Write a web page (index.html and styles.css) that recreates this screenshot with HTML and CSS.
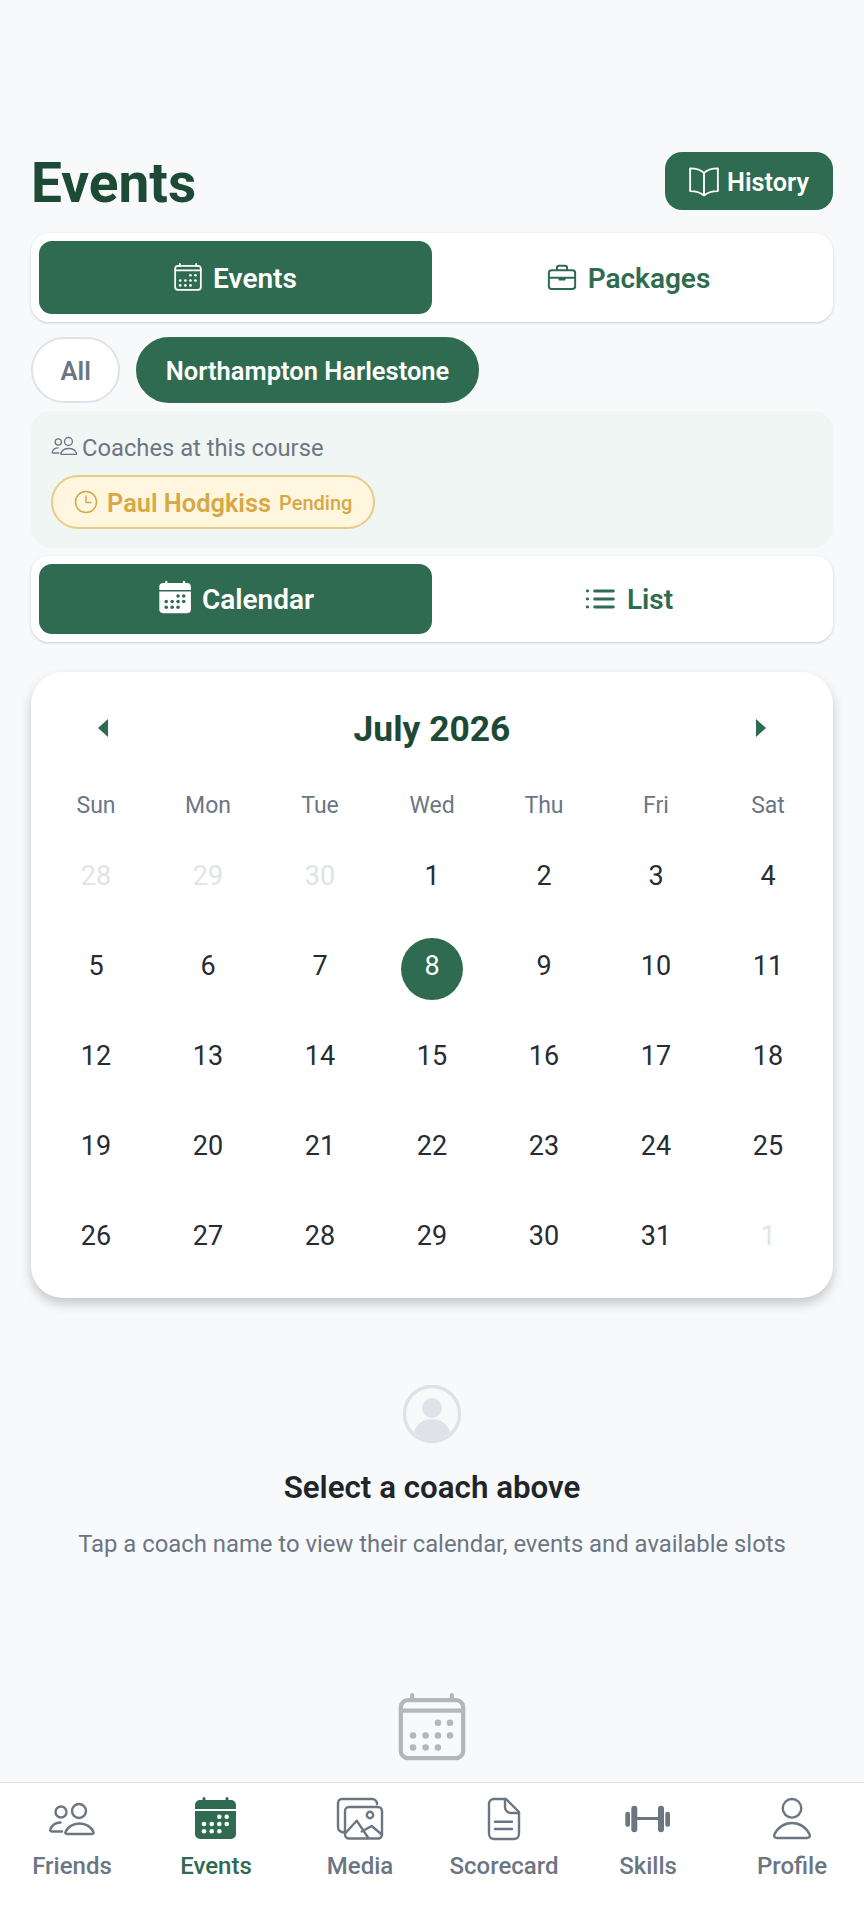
FILE: index.html
```html
<!DOCTYPE html>
<html lang="en">
<head>
    <meta charset="UTF-8">
    <meta name="viewport" content="width=device-width, initial-scale=1.0">
    <title>Events</title>
    <link rel="stylesheet" href="styles.css">
</head>
<body>
    <svg class="defs" width="0" height="0" aria-hidden="true">
        <symbol id="i-cal" viewBox="0 0 48 48">
            <rect x="2" y="5" width="44" height="41" rx="5" fill="none" stroke="currentColor" stroke-width="3"/>
            <path d="M2 12.500h44M10 1.500v3.500M38 1.500v3.500" fill="none" stroke="currentColor" stroke-width="3" stroke-linecap="round"/>
            <g fill="currentColor">
                <circle cx="28.200" cy="21" r="2.300"/><circle cx="36.700" cy="21" r="2.300"/>
                <circle cx="10.600" cy="30" r="2.300"/><circle cx="19.500" cy="30" r="2.300"/><circle cx="28.200" cy="30" r="2.300"/><circle cx="36.700" cy="30" r="2.300"/>
                <circle cx="10.600" cy="38.500" r="2.300"/><circle cx="19.500" cy="38.500" r="2.300"/><circle cx="28.200" cy="38.500" r="2.300"/>
            </g>
        </symbol>
        <symbol id="i-cal-fill" viewBox="0 0 48 48">
            <path d="M8 4h31a5 5 0 0 1 5 5v4H3V9a5 5 0 0 1 5-5zM3 15h41v23a5 5 0 0 1-5 5H8a5 5 0 0 1-5-5z" fill="currentColor"/>
            <path d="M12 2.500v3M35 2.500v3" stroke="currentColor" stroke-width="3" stroke-linecap="round"/>
            <g fill="var(--dot)">
                <circle cx="27.300" cy="20.700" r="2.300"/><circle cx="34.700" cy="20.700" r="2.300"/>
                <circle cx="12" cy="28" r="2.300"/><circle cx="19.700" cy="28" r="2.300"/><circle cx="27.300" cy="28" r="2.300"/><circle cx="34.700" cy="28" r="2.300"/>
                <circle cx="12" cy="35.300" r="2.300"/><circle cx="19.700" cy="35.300" r="2.300"/><circle cx="27.300" cy="35.300" r="2.300"/>
            </g>
        </symbol>
        <symbol id="i-people" viewBox="0 0 48 48">
            <g fill="none" stroke="currentColor" stroke-width="2.400" stroke-linejoin="round" stroke-linecap="round">
                <circle cx="13" cy="16" r="5.500"/>
                <circle cx="31" cy="15" r="7"/>
                <path d="M14 35.500H4c-1.500 0-2.200-1-1.700-2C4 29 8 26.500 12.500 26.500"/>
                <path d="M19 38h25c1.500 0 2-1 1.500-2C43.500 31 38 27.500 31.500 27.500S19.500 31 17.500 36c-.5 1 0 2 1.500 2z"/>
            </g>
        </symbol>
    </svg>

    <main class="content">
        <header class="page-head">
            <h1>Events</h1>
            <button class="btn-history">
                <svg class="ico-30" viewBox="1.400 2 21.200 21.200" fill="none" stroke="currentColor" stroke-width="1.300" stroke-linejoin="round" stroke-linecap="round"><path d="M12 6.200C10 4.200 6.600 3 2.200 3v16c4.400 0 7.800 1.200 9.800 3.200 2-2 5.400-3.200 9.800-3.200V3C17.600 3 14 4.200 12 6.200zM12 6.200v16"/></svg>
                History
            </button>
        </header>

        <div class="tabs">
            <button class="tab active">
                <svg class="ico-28"><use href="#i-cal"/></svg>
                Events
            </button>
            <button class="tab">
                <svg class="ico-30" viewBox="0 0 24 24" fill="none" stroke="currentColor" stroke-width="1.600" stroke-linejoin="round"><rect x="1.500" y="6.500" width="21" height="15" rx="2.200"/><path d="M8 6.500V4.500A1.500 1.500 0 0 1 9.500 3h5A1.500 1.500 0 0 1 16 4.500v2M1.500 12.500h21"/><path d="M10 12.500v1.400h4v-1.400" fill="currentColor"/></svg>
                Packages
            </button>
        </div>

        <div class="chips">
            <button class="chip">All</button>
            <button class="chip selected">Northampton Harlestone</button>
        </div>

        <section class="coach-panel">
            <div class="coach-label">
                <svg class="ico-people"><use href="#i-people"/></svg>
                Coaches at this course
            </div>
            <div class="coach-chip">
                <svg class="ico-24" viewBox="0 0 24 24" fill="none" stroke="currentColor" stroke-width="1.500" stroke-linecap="round" stroke-linejoin="round"><circle cx="12" cy="12" r="10.500"/><path d="M12 6v6.500h5"/></svg>
                <span class="coach-name">Paul Hodgkiss</span>
                <span class="coach-status">Pending</span>
            </div>
        </section>

        <div class="tabs view-tabs">
            <button class="tab active tight">
                <svg class="ico-37 dot-green"><use href="#i-cal-fill"/></svg>
                Calendar
            </button>
            <button class="tab">
                <svg class="ico-32" viewBox="0 0 24 24" fill="none" stroke="currentColor" stroke-width="2.200" stroke-linecap="round"><path d="M8 6h14M8 12h14M8 18h14M2.500 6h.2M2.500 12h.2M2.500 18h.2"/></svg>
                List
            </button>
        </div>

        <section class="calendar">
            <div class="cal-head">
                <svg class="arrow" viewBox="0 0 12 20"><path d="M11 1v18L1 10z"/></svg>
                <h2>July 2026</h2>
                <svg class="arrow" viewBox="0 0 12 20"><path d="M1 1v18l10-9z"/></svg>
            </div>
            <div class="cal-grid weekdays">
                <span>Sun</span><span>Mon</span><span>Tue</span><span>Wed</span><span>Thu</span><span>Fri</span><span>Sat</span>
            </div>
            <div class="cal-grid days">
                <span class="muted">28</span><span class="muted">29</span><span class="muted">30</span><span>1</span><span>2</span><span>3</span><span>4</span>
                <span>5</span><span>6</span><span>7</span><span class="today">8</span><span>9</span><span>10</span><span>11</span>
                <span>12</span><span>13</span><span>14</span><span>15</span><span>16</span><span>17</span><span>18</span>
                <span>19</span><span>20</span><span>21</span><span>22</span><span>23</span><span>24</span><span>25</span>
                <span>26</span><span>27</span><span>28</span><span>29</span><span>30</span><span>31</span><span class="muted">1</span>
            </div>
        </section>

        <section class="empty">
            <svg class="empty-icon" viewBox="0 0 58 58"><circle cx="29" cy="29" r="27.500" fill="none" stroke="currentColor" stroke-width="3.500"/><circle cx="29" cy="23" r="10" fill="currentColor"/><path d="M11 47c3-9 10-13 18-13s15 4 18 13c-5 5-11 8-18 8s-13-3-18-8z" fill="currentColor"/></svg>
            <h3>Select a coach above</h3>
            <p>Tap a coach name to view their calendar, events and available slots</p>
        </section>

        <svg class="big-cal"><use href="#i-cal"/></svg>
    </main>

    <nav class="tabbar">
        <a class="nav-item">
            <svg class="nav-ico"><use href="#i-people"/></svg>
            Friends
        </a>
        <a class="nav-item active">
            <svg class="nav-ico dot-white"><use href="#i-cal-fill"/></svg>
            Events
        </a>
        <a class="nav-item">
            <svg class="nav-ico" viewBox="0 0 48 48" fill="none" stroke="currentColor" stroke-width="2.400" stroke-linejoin="round" stroke-linecap="round"><path d="M8 36.500C4 36 2 34 2 31V7a4 4 0 0 1 4-4h30a5 5 0 0 1 5 5"/><rect x="9" y="11" width="37" height="31.500" rx="4"/><circle cx="34" cy="19" r="3.200"/><path d="M9.500 37l11.200-12.300L32 41.500M25.700 35.500l10-5.500 10 8.500"/></svg>
            Media
        </a>
        <a class="nav-item">
            <svg class="nav-ico" viewBox="0 0 48 48" fill="none" stroke="currentColor" stroke-width="2.400" stroke-linejoin="round" stroke-linecap="round"><path d="M26 3H14a5 5 0 0 0-5 5v30a5 5 0 0 0 5 5h20a5 5 0 0 0 5-5V16z"/><path d="M25 3v8a6 6 0 0 0 6 6h8M15 25.700h17M15 33h17"/></svg>
            Scorecard
        </a>
        <a class="nav-item">
            <svg class="nav-ico" viewBox="0 0 48 48"><g fill="currentColor"><rect x="1.300" y="15.700" width="4.700" height="15" rx="2"/><rect x="7.300" y="9.700" width="6" height="26.600" rx="3"/><rect x="34" y="9.700" width="6" height="26.600" rx="3"/><rect x="41.300" y="15.700" width="4.700" height="15" rx="2"/><rect x="13" y="21" width="21.500" height="3"/></g></svg>
            Skills
        </a>
        <a class="nav-item">
            <svg class="nav-ico" viewBox="0 0 48 48" fill="none" stroke="currentColor" stroke-width="2.400" stroke-linejoin="round"><circle cx="24" cy="12.300" r="9.300"/><path d="M9 42h30c2.200 0 3.500-1.500 2.600-3.500C38.500 31.500 31.500 27 24 27S9.500 31.500 6.400 38.500C5.500 40.500 6.800 42 9 42z"/></svg>
            Profile
        </a>
    </nav>
</body>
</html>
```

FILE: styles.css
```css
* {
    box-sizing: border-box;
}
html, body {
    height: 100%;
}
body {
    display: flex;
    flex-direction: column;
    height: 1923px;
    margin: 0;
    overflow: hidden;
    font-family: Roboto, "Noto Sans", sans-serif;
    background-color: #f8f9fb;
    color: #212529;
}
button {
    font-family: inherit;
    border: none;
    cursor: pointer;
}
svg {
    flex-shrink: 0;
}
.defs {
    position: absolute;
}
.content {
    display: flex;
    flex-direction: column;
    flex-grow: 1;
    height: 1782px;
    padding: 152px 31px 0;
    overflow: hidden;
}
.page-head {
    display: flex;
    justify-content: space-between;
    align-items: center;
    height: 58px;
}
.page-head h1 {
    margin: 4px 0 0;
    font-size: 55px;
    font-weight: 700;
    color: #1c4a35;
}
.btn-history {
    display: flex;
    align-items: center;
    gap: 8px;
    height: 58px;
    padding: 2px 24px 0;
    font-size: 25.300px;
    font-weight: 600;
    color: white;
    background-color: #2f6b50;
    border-radius: 17px;
}
.ico-24 { width: 24px; height: 24px; }
.ico-28 { width: 28px; height: 28px; }
.ico-30 { width: 30px; height: 30px; }
.ico-32 { width: 32px; height: 32px; }
.ico-37 { width: 37px; height: 37px; }
.dot-green { --dot: #2f6b50; }
.dot-white { --dot: #fff; }
.tabs {
    display: flex;
    height: 89px;
    margin-top: 23px;
    padding: 8px;
    background-color: white;
    border-radius: 18px;
    box-shadow: 0 1px 3px rgba(0, 0, 0, 0.18);
}
.tab {
    display: flex;
    justify-content: center;
    align-items: center;
    gap: 11px;
    width: 393px;
    padding-top: 2px;
    font-size: 28px;
    font-weight: 600;
    color: #2f6b50;
    background: none;
    border-radius: 13px;
}
.tab.tight {
    gap: 8px;
}
.tab svg {
    margin-top: -2px;
}
.tab + .tab {
    flex-grow: 1;
}
.tab.active {
    color: white;
    background-color: #2f6b50;
}
.chips {
    display: flex;
    gap: 16px;
    margin-top: 15px;
}
.chip {
    height: 66px;
    padding: 2px 27.500px 0;
    font-size: 25.500px;
    font-weight: 600;
    color: #6c7683;
    background-color: white;
    border: 2px solid #dfe2e8;
    border-radius: 33px;
}
.chip.selected {
    color: white;
    background-color: #2f6b50;
    border-color: #2f6b50;
}
.coach-panel {
    height: 137px;
    margin-top: 8px;
    padding: 21px 20px;
    background-color: #f0f6f4;
    border-radius: 20px;
}
.coach-label {
    display: flex;
    align-items: center;
    gap: 4px;
    height: 32px;
    font-size: 23.750px;
    color: #6c7683;
}
.ico-people {
    width: 27px;
    height: 27px;
    margin-top: -4px;
}
.coach-chip {
    display: inline-flex;
    align-items: center;
    height: 54px;
    margin-top: 11px;
    padding: 2px 21px 0;
    color: #d8a845;
    background-color: #fef6df;
    border: 2px solid #e9cb84;
    border-radius: 27px;
}
.coach-chip svg {
    margin-top: -2px;
}
.coach-name {
    margin-left: 9px;
    font-size: 25.400px;
    font-weight: 600;
}
.coach-status {
    margin-left: 8px;
    font-size: 20px;
    font-weight: 500;
}
.view-tabs {
    height: 86px;
    margin-top: 8px;
}
.calendar {
    height: 626px;
    margin-top: 30px;
    padding: 0 9px;
    background-color: white;
    border-radius: 32px;
    box-shadow: 0 6px 12px rgba(0, 0, 0, 0.2);
}
.cal-head {
    display: flex;
    justify-content: space-between;
    align-items: center;
    height: 114px;
    padding: 0 57px;
}
.cal-head h2 {
    margin: 0;
    font-size: 35.400px;
    font-weight: 700;
    color: #1c4a35;
}
.arrow {
    width: 12px;
    height: 20px;
    fill: #2f6b50;
    margin-top: -2px;
}
.cal-grid {
    display: grid;
    grid-template-columns: repeat(7, 1fr);
    text-align: center;
}
.weekdays {
    height: 40px;
    font-size: 23px;
    color: #6c7683;
    line-height: 40px;
}
.days {
    grid-auto-rows: 90px;
    margin-top: 8px;
    font-size: 27px;
    color: #272c33;
    justify-items: center;
    align-items: center;
}
.days span {
    width: 62px;
    height: 62px;
    line-height: 56px;
    border-radius: 50%;
}
.days .muted {
    color: #e0e3e8;
}
.days .today {
    color: white;
    background-color: #2f6b50;
}
.empty {
    display: flex;
    flex-direction: column;
    align-items: center;
    margin-top: 87px;
}
.empty-icon {
    width: 58px;
    height: 58px;
    color: #dfe2e8;
}
.empty h3 {
    margin: 26px 0 0;
    font-size: 31.300px;
    font-weight: 600;
    line-height: 38px;
}
.empty p {
    margin: 22px 0 0;
    font-size: 23.850px;
    line-height: 30px;
    color: #6c7683;
}
.big-cal {
    width: 68px;
    height: 68px;
    margin: 134px auto 0;
    color: #b3b6ba;
}
.tabbar {
    display: flex;
    height: 141px;
    background-color: white;
    border-top: 1px solid #dcdfe2;
}
.nav-item {
    display: flex;
    flex-direction: column;
    align-items: center;
    flex: 1;
    padding-top: 13px;
    font-size: 24px;
    font-weight: 500;
    color: #6c7683;
}
.nav-item.active {
    color: #2f6b50;
}
.nav-ico {
    width: 48px;
    height: 48px;
    margin-bottom: 8px;
}
```
